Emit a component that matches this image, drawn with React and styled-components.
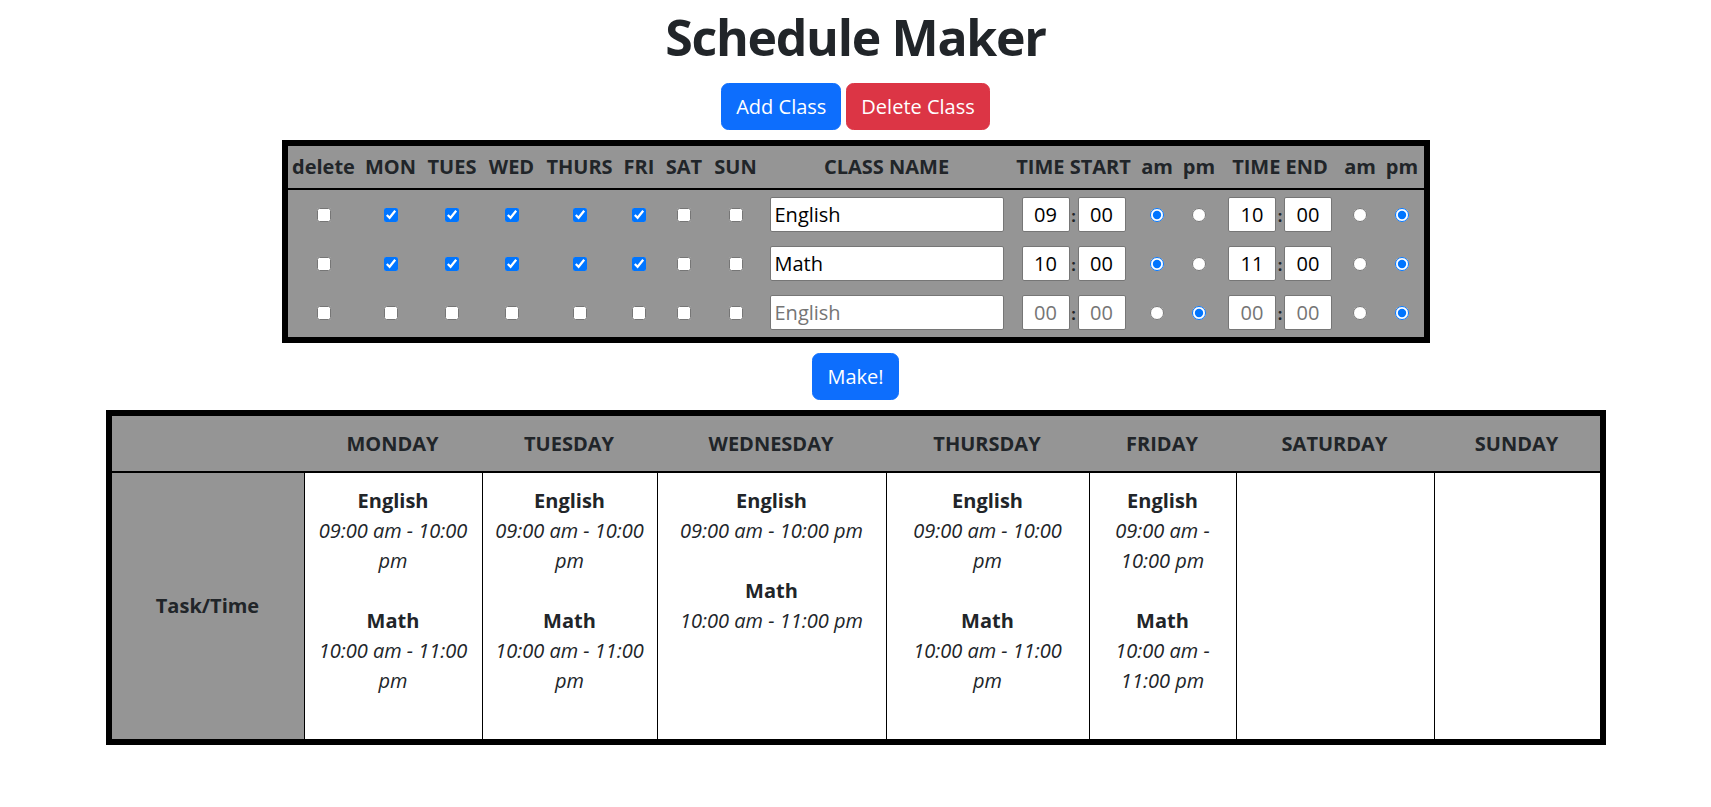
import React from "react";
import styled, { createGlobalStyle } from "styled-components";

const GlobalStyle = createGlobalStyle`
  html, body { margin: 0; padding: 0; background: #ffffff; }
  * { box-sizing: border-box; }
`;

const GRAY = "#959595";
const INK = "#212529";

const Page = styled.div`
  display: flex;
  flex-direction: column;
  align-items: center;
  font-family: "Open Sans", "Noto Sans", "Liberation Sans", sans-serif;
  font-size: 20px;
  line-height: 30px;
  color: ${INK};
`;

const Title = styled.h1`
  margin: 7px 0 16px;
  font-size: 50px;
  line-height: 60px;
  font-weight: 700;
  letter-spacing: -1.3px;
`;

const ButtonRow = styled.div`
  display: flex;
  gap: 5px;
  margin-bottom: 10px;
`;

const Button = styled.button`
  font-family: inherit;
  font-size: 20px;
  line-height: 30px;
  padding: 7.5px 14px;
  border-radius: 7.5px;
  border: 1px solid ${(p) => (p.$variant === "danger" ? "#dc3545" : "#0d6efd")};
  background: ${(p) => (p.$variant === "danger" ? "#dc3545" : "#0d6efd")};
  color: #ffffff;
  cursor: pointer;
`;

const MakeRow = styled.div`
  margin: 10px 0;
`;

const Table = styled.table`
  width: ${(p) => p.$width}px;
  table-layout: fixed;
  border-collapse: separate;
  border-spacing: 0;
  border: 6px solid #000000;
  background: ${GRAY};
`;

const HeadCell = styled.th`
  padding: ${(p) => p.$pad || "6px 0"};
  font-weight: 700;
  text-align: center;
  white-space: nowrap;
  border-bottom: 2px solid #000000;
  color: ${INK};
`;

const EditCell = styled.td`
  padding: 7px;
  text-align: center;
  vertical-align: middle;
`;

const Check = styled.input`
  display: block;
  width: 14px;
  height: 14px;
  margin: 0 auto;
`;

const NameInput = styled.input`
  display: block;
  width: 100%;
  height: 35px;
  padding: 0 4px;
  font-family: inherit;
  font-size: 20px;
  color: #000000;
  background: #ffffff;
  border: 1px solid #767676;
  border-radius: 2px;
  &::placeholder { color: #757575; }
`;

const TimeGroup = styled.div`
  display: flex;
  justify-content: center;
  align-items: baseline;
`;

const TimeInput = styled.input`
  width: 48px;
  height: 35px;
  padding: 0 2px;
  font-family: inherit;
  font-size: 20px;
  text-align: center;
  color: #000000;
  background: #ffffff;
  border: 1px solid #767676;
  border-radius: 2px;
  &::placeholder { color: #757575; }
`;

const Colon = styled.span`
  display: inline-block;
  width: 8px;
  text-align: center;
  font-weight: 700;
  font-size: 16px;
  line-height: 16px;
`;

const DayCell = styled.td`
  padding: 13px 12px;
  text-align: center;
  vertical-align: top;
  background: #ffffff;
  border-left: 1px solid #000000;
`;

const LabelCell = styled.td`
  padding: 13px 12px;
  text-align: center;
  vertical-align: middle;
  font-weight: 700;
  background: ${GRAY};
`;

const Entry = styled.div`
  margin-bottom: 30px;
`;

const EntryName = styled.div`
  font-weight: 700;
`;

const EntryTime = styled.div`
  font-style: italic;
`;

const editCols = [72, 62, 61, 58, 78, 41, 49, 54, 248, 126, 41, 43, 119, 41, 43];
const editHeads = ["delete", "MON", "TUES", "WED", "THURS", "FRI", "SAT", "SUN", "CLASS NAME", "TIME START", "am", "pm", "TIME END", "am", "pm"];

const rows = [
  { days: [1, 1, 1, 1, 1, 0, 0], name: "English", sh: "09", sm: "00", sAm: true, eh: "10", em: "00", eAm: false },
  { days: [1, 1, 1, 1, 1, 0, 0], name: "Math", sh: "10", sm: "00", sAm: true, eh: "11", em: "00", eAm: false },
  { days: [0, 0, 0, 0, 0, 0, 0], name: "", sh: "", sm: "", sAm: false, eh: "", em: "", eAm: false },
];

const dayNames = ["MONDAY", "TUESDAY", "WEDNESDAY", "THURSDAY", "FRIDAY", "SATURDAY", "SUNDAY"];
const scheduleCols = [192, 178, 175, 229, 203, 147, 198, 166];

const classes = [
  { name: "English", time: "09:00 am - 10:00 pm", days: [0, 1, 2, 3, 4] },
  { name: "Math", time: "10:00 am - 11:00 pm", days: [0, 1, 2, 3, 4] },
];

function EditRow({ row, index }) {
  return (
    <tr>
      <EditCell><Check type="checkbox" /></EditCell>
      {row.days.map((d, i) => (
        <EditCell key={i}><Check type="checkbox" defaultChecked={!!d} /></EditCell>
      ))}
      <EditCell>
        <NameInput type="text" defaultValue={row.name} placeholder="English" />
      </EditCell>
      <EditCell>
        <TimeGroup>
          <TimeInput type="text" defaultValue={row.sh} placeholder="00" />
          <Colon>:</Colon>
          <TimeInput type="text" defaultValue={row.sm} placeholder="00" />
        </TimeGroup>
      </EditCell>
      <EditCell><Check type="radio" name={`start-${index}`} defaultChecked={row.sAm} /></EditCell>
      <EditCell><Check type="radio" name={`start-${index}`} defaultChecked={!row.sAm} /></EditCell>
      <EditCell>
        <TimeGroup>
          <TimeInput type="text" defaultValue={row.eh} placeholder="00" />
          <Colon>:</Colon>
          <TimeInput type="text" defaultValue={row.em} placeholder="00" />
        </TimeGroup>
      </EditCell>
      <EditCell><Check type="radio" name={`end-${index}`} defaultChecked={row.eAm} /></EditCell>
      <EditCell><Check type="radio" name={`end-${index}`} defaultChecked={!row.eAm} /></EditCell>
    </tr>
  );
}

export default function App() {
  return (
    <Page>
      <GlobalStyle />
      <Title>Schedule Maker</Title>
      <ButtonRow>
        <Button type="button">Add Class</Button>
        <Button type="button" $variant="danger">Delete Class</Button>
      </ButtonRow>

      <Table $width={1148}>
        <colgroup>
          {editCols.map((w, i) => <col key={i} style={{ width: w }} />)}
        </colgroup>
        <thead>
          <tr>
            {editHeads.map((h, i) => <HeadCell key={i}>{h}</HeadCell>)}
          </tr>
        </thead>
        <tbody>
          {rows.map((r, i) => <EditRow key={i} row={r} index={i} />)}
        </tbody>
      </Table>

      <MakeRow>
        <Button type="button">Make!</Button>
      </MakeRow>

      <Table $width={1500}>
        <colgroup>
          {scheduleCols.map((w, i) => <col key={i} style={{ width: w }} />)}
        </colgroup>
        <thead>
          <tr>
            <HeadCell $pad="12.5px 0" />
            {dayNames.map((d) => <HeadCell key={d} $pad="12.5px 0">{d}</HeadCell>)}
          </tr>
        </thead>
        <tbody>
          <tr>
            <LabelCell>Task/Time</LabelCell>
            {dayNames.map((d, di) => (
              <DayCell key={d}>
                {classes.filter((c) => c.days.includes(di)).map((c) => (
                  <Entry key={c.name}>
                    <EntryName>{c.name}</EntryName>
                    <EntryTime>{c.time}</EntryTime>
                  </Entry>
                ))}
              </DayCell>
            ))}
          </tr>
        </tbody>
      </Table>
    </Page>
  );
}
